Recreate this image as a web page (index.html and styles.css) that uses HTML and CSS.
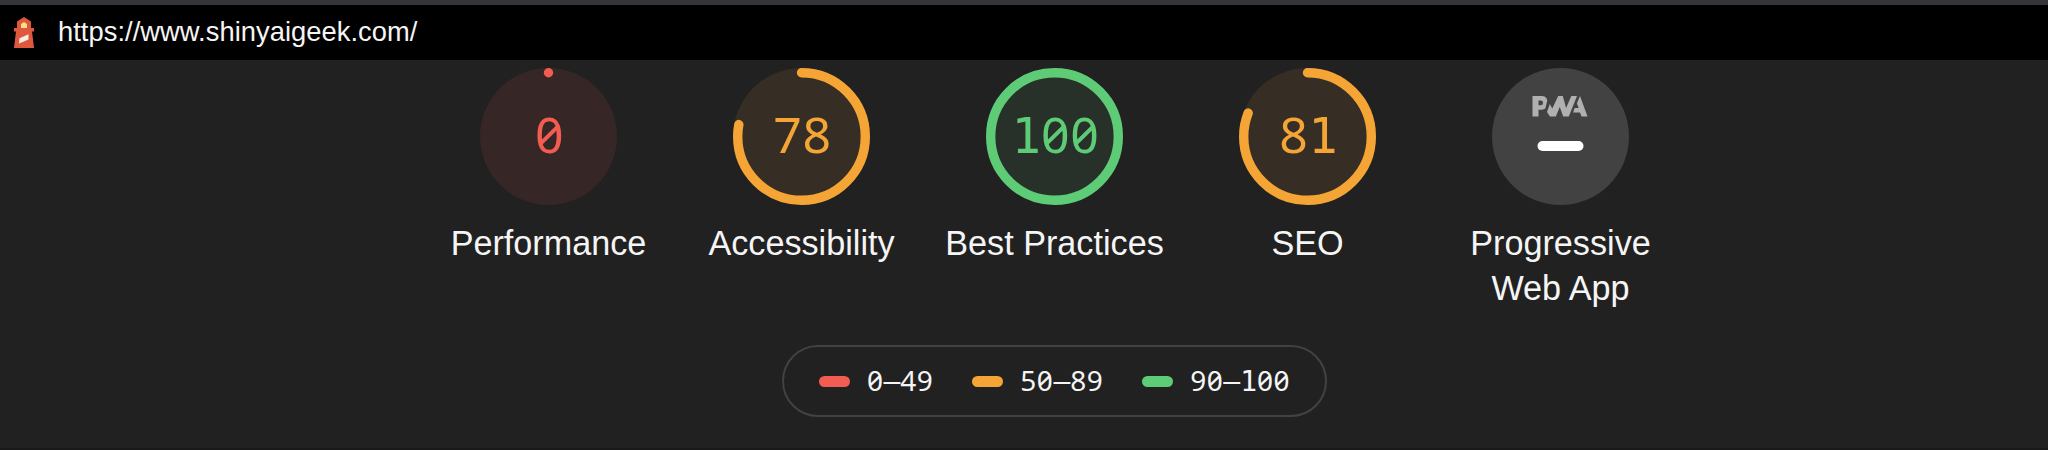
FILE: index.html
```
<!DOCTYPE html>
<html lang="en">
<head>
<meta charset="utf-8">
<title>Lighthouse report</title>
<link rel="stylesheet" href="styles.css">
</head>
<body>
<header class="topbar">
  <svg class="topbar__logo" width="20" height="31" viewBox="0 0 20 31">
    <path fill="#e0583c" d="M10 0l7 4.500V11h3v3.500h-2L20 31H0l2-16.500H0V11h3V4.500z"/>
    <path fill="#f9dc84" d="M7 11V7l3-2 3 2v4z"/>
    <path fill="#f7ece6" d="M5.500 21.200l9-4v5.300l-9.500 4z"/>
  </svg>
  <a class="topbar__url">https://www.shinyaigeek.com/</a>
</header>
<main class="report">
  <section class="scores">
    <div class="gauge gauge--fail">
      <div class="gauge__dial">
        <svg class="gauge__svg" viewBox="0 0 137 137"><circle class="gauge__base" cx="68.500" cy="68.500" r="68.500"/><path class="gauge__arc" d="M68.500 4.700v.01"/></svg>
        <div class="gauge__value">0</div>
      </div>
      <div class="gauge__label">Performance</div>
    </div>
    <div class="gauge gauge--average">
      <div class="gauge__dial">
        <svg class="gauge__svg" viewBox="0 0 137 137"><circle class="gauge__base" cx="68.500" cy="68.500" r="68.500"/><circle class="gauge__arc" cx="68.500" cy="68.500" r="63.800" pathLength="100" stroke-dasharray="78 100" transform="rotate(-90 68.500 68.500)"/></svg>
        <div class="gauge__value">78</div>
      </div>
      <div class="gauge__label">Accessibility</div>
    </div>
    <div class="gauge gauge--pass">
      <div class="gauge__dial">
        <svg class="gauge__svg" viewBox="0 0 137 137"><circle class="gauge__base" cx="68.500" cy="68.500" r="68.500"/><circle class="gauge__arc" cx="68.500" cy="68.500" r="63.800"/></svg>
        <div class="gauge__value"><span class="one">1</span>00</div>
      </div>
      <div class="gauge__label">Best Practices</div>
    </div>
    <div class="gauge gauge--average">
      <div class="gauge__dial">
        <svg class="gauge__svg" viewBox="0 0 137 137"><circle class="gauge__base" cx="68.500" cy="68.500" r="68.500"/><circle class="gauge__arc" cx="68.500" cy="68.500" r="63.800" pathLength="100" stroke-dasharray="81 100" transform="rotate(-90 68.500 68.500)"/></svg>
        <div class="gauge__value">8<span class="one">1</span></div>
      </div>
      <div class="gauge__label">SEO</div>
    </div>
    <div class="gauge">
      <div class="gauge__dial">
        <svg class="gauge__svg" viewBox="0 0 137 137">
          <circle fill="#424242" cx="68.500" cy="68.500" r="68.500"/>
          <g fill="#b0b0b0" transform="translate(40.500 28)">
            <path fill-rule="evenodd" d="M0 0h9.500q3 0 4.500 2.200l.8 2.200-2 8.200q-1.300 1.100-3.300 1.100H6V20.500H0zM6 4.500v4.800h2.300q2.200 0 2.200-2.400T8.300 4.500z"/>
            <path d="M17.300 8l2.500 4.500L25.700 0h4.600l3.300 12L38.800 0h5.700l-8.200 20.500h-5.600L27.300 11l-4 9.500h-5.900l-2.900-4.500z"/>
            <path d="M47.500 0L55 20.500h-6l-1.500-4h-7l1.700-4.500h4L44.400 7.500z"/>
          </g>
          <rect fill="#fff" x="45.500" y="73" width="46" height="10" rx="5"/>
        </svg>
      </div>
      <div class="gauge__label">Progressive<br>Web App</div>
    </div>
  </section>
  <section class="scale">
    <div class="scale__item scale__item--fail"><i class="scale__mark"></i><span class="scale__text">0<span class="dash">–</span>49</span></div>
    <div class="scale__item scale__item--average"><i class="scale__mark"></i><span class="scale__text">50<span class="dash">–</span>89</span></div>
    <div class="scale__item scale__item--pass"><i class="scale__mark"></i><span class="scale__text">90<span class="dash">–</span><span class="one">1</span>00</span></div>
  </section>
</main>
</body>
</html>
```
FILE: styles.css
```
* { box-sizing: border-box; }
body {
  margin: 0;
  height: 450px;
  overflow: hidden;
  display: flex;
  flex-direction: column;
  background: #212121;
  color: #f5f5f5;
  font-family: "Liberation Sans", Arial, sans-serif;
}
.topbar {
  flex: none;
  height: 60px;
  display: flex;
  align-items: center;
  gap: 24px;
  padding-left: 14px;
  padding-bottom: 1px;
  background: #000;
  border-top: 5px solid #35363a;
}
.topbar__url { font-size: 27.300px; line-height: 32px; letter-spacing: .05px; }
.report {
  flex: 1;
  display: flex;
  flex-direction: column;
  align-items: center;
  padding-left: 61px;
  padding-top: 8px;
  border-bottom: 2px solid #191919;
}
.scores { display: flex; }
.gauge {
  width: 253px;
  display: flex;
  flex-direction: column;
  align-items: center;
}
.gauge--fail { --tone: #f35c50; --tint: #362726; }
.gauge--average { --tone: #f4a535; --tint: #362d24; }
.gauge--pass { --tone: #5ecb76; --tint: #273129; }
.gauge__dial { display: grid; width: 137px; height: 137px; }
.gauge__svg, .gauge__value { grid-area: 1 / 1; }
.gauge__svg { width: 137px; height: 137px; }
.gauge__base { fill: var(--tint); }
.gauge__arc { fill: none; stroke: var(--tone); stroke-width: 9.400px; stroke-linecap: round; }
.gauge__value {
  padding-left: 2px;
  text-align: center;
  color: var(--tone);
  font: 50px/132px "Noto Sans", sans-serif;
  font-feature-settings: "zero", "tnum";
  letter-spacing: .6px;
}
.gauge__value .one { font: 49px/0 "DejaVu Sans Mono", monospace; letter-spacing: 0; }
.gauge__label {
  margin-top: 16px;
  font-size: 34.200px;
  line-height: 45px;
  text-align: center;
  white-space: nowrap;
}
.scale {
  margin-top: 34px;
  height: 72px;
  display: flex;
  align-items: center;
  gap: 39px;
  padding: 0 35px;
  border: 2px solid #424242;
  border-radius: 36px;
}
.scale__item { display: flex; align-items: center; gap: 17px; }
.scale__item--fail { --tone: #f35c50; }
.scale__item--average { --tone: #f4a535; }
.scale__item--pass { --tone: #5ecb76; }
.scale__mark { width: 31px; height: 11px; border-radius: 6px; background: var(--tone); }
.scale__text {
  padding-bottom: 2px;
  font: 28px/40px "Noto Sans", sans-serif;
  font-feature-settings: "zero", "tnum";
  letter-spacing: .5px;
}
.scale__text .one, .scale__text .dash { font: 28px/0 "DejaVu Sans Mono", monospace; letter-spacing: 0; }
```
